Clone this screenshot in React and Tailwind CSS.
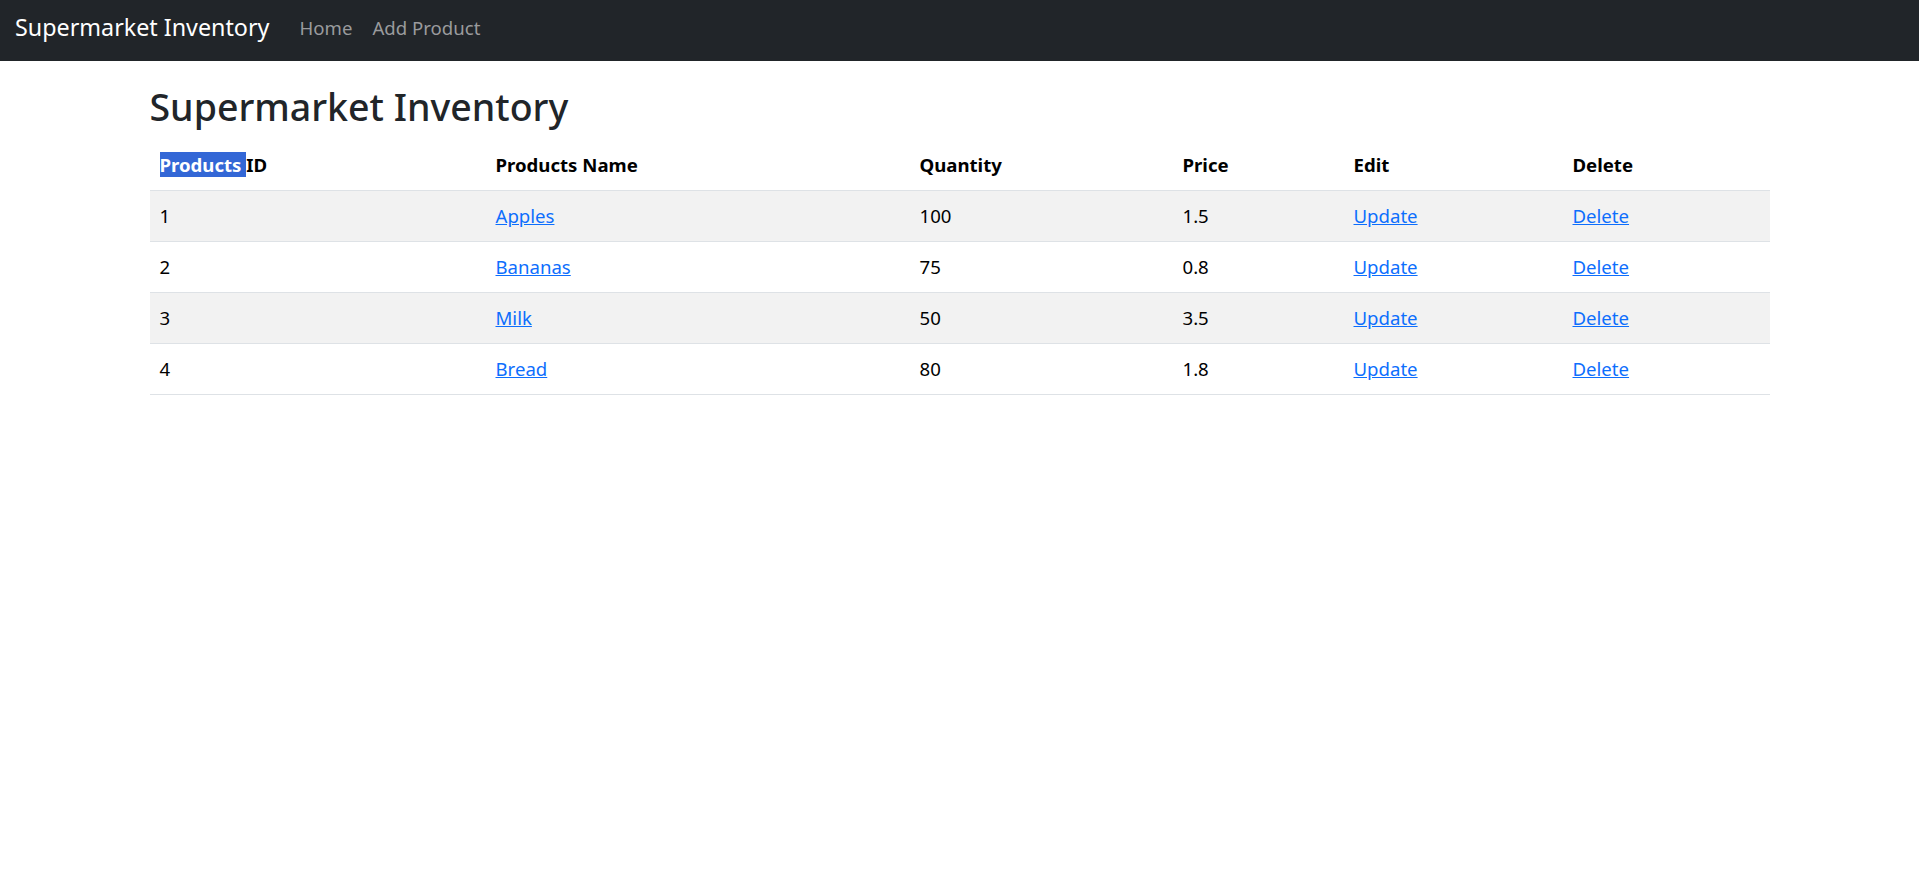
const products = [
  { id: 1, name: "Apples", quantity: 100, price: 1.5 },
  { id: 2, name: "Bananas", quantity: 75, price: 0.8 },
  { id: 3, name: "Milk", quantity: 50, price: 3.5 },
  { id: 4, name: "Bread", quantity: 80, price: 1.8 },
];

function Navbar() {
  return (
    <nav className="h-[61px] bg-[#212529] flex items-center px-[15px] pb-[6px]">
      <a href="#" className="text-white text-[23.3px] leading-[37px] mr-[20px]">
        Supermarket Inventory
      </a>
      <a href="#" className="text-[#9a9b9d] text-[18.6px] leading-[30px] px-[10px]">
        Home
      </a>
      <a href="#" className="text-[#9a9b9d] text-[18.6px] leading-[30px] px-[10px]">
        Add Product
      </a>
    </nav>
  );
}

export default function App() {
  return (
    <div className="min-h-screen bg-white text-[#212529] font-['Noto_Sans',sans-serif] text-[18.6px] leading-[30px]">
      <Navbar />

      <div className="w-[1620px] mx-auto pt-[22px]">
        <h1 className="text-[37.5px] leading-[48px] font-medium mb-[9px]">Supermarket Inventory</h1>

        <table className="w-full table-fixed border-collapse text-left">
          <thead>
            <tr className="border-b border-[#dee2e6] text-black">
              <th className="w-[336px] p-[10px] font-bold">
                <span className="bg-[#3367d6] text-white">Products </span>ID
              </th>
              <th className="w-[424px] p-[10px] font-bold">Products Name</th>
              <th className="w-[263px] p-[10px] font-bold">Quantity</th>
              <th className="w-[171px] p-[10px] font-bold">Price</th>
              <th className="w-[219px] p-[10px] font-bold">Edit</th>
              <th className="p-[10px] font-bold">Delete</th>
            </tr>
          </thead>
          <tbody>
            {products.map((p, i) => (
              <tr
                key={p.id}
                className={`border-b border-[#dee2e6] text-black ${i % 2 === 0 ? "bg-[#f2f2f2]" : "bg-white"}`}
              >
                <td className="p-[10px]">{p.id}</td>
                <td className="p-[10px]">
                  <a href="#" className="text-[#0d6efd] underline">{p.name}</a>
                </td>
                <td className="p-[10px]">{p.quantity}</td>
                <td className="p-[10px]">{p.price}</td>
                <td className="p-[10px]">
                  <a href="#" className="text-[#0d6efd] underline">Update</a>
                </td>
                <td className="p-[10px]">
                  <a href="#" className="text-[#0d6efd] underline">Delete</a>
                </td>
              </tr>
            ))}
          </tbody>
        </table>
      </div>
    </div>
  );
}
